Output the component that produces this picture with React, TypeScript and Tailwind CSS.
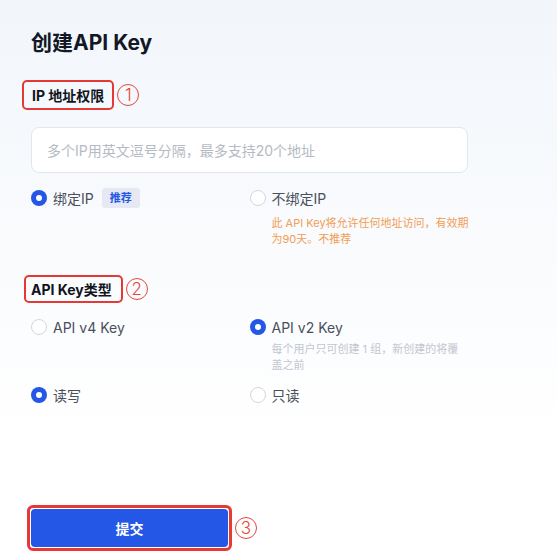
import React from "react";

const Radio: React.FC<{ checked?: boolean }> = ({ checked }) =>
  checked ? (
    <span className="flex h-4 w-4 shrink-0 items-center justify-center rounded-full bg-[#2457e6]">
      <span className="h-[6px] w-[6px] rounded-full bg-white" />
    </span>
  ) : (
    <span className="h-4 w-4 shrink-0 rounded-full border border-[#d3d6de] bg-white" />
  );

const Option: React.FC<{ checked?: boolean; label: string; children?: React.ReactNode }> = ({
  checked,
  label,
  children,
}) => (
  <div className="flex h-5 items-center gap-[6px]">
    <Radio checked={checked} />
    <span className="text-[14px] text-[#4a4f5c]">{label}</span>
    {children}
  </div>
);

// circled step number next to the highlighted blocks
const Marker: React.FC<{ n: string }> = ({ n }) => (
  <span className="ml-[3px] flex h-[22px] w-[22px] items-center justify-center rounded-full border border-[#e8453c] text-[17px] leading-none font-light text-[#e8453c]">
    {n}
  </span>
);

export default function App() {
  return (
    <div className="flex h-[552px] w-full flex-col bg-linear-to-b from-[#f2f6fb] to-white to-[80%] pl-[31px] pt-[29px] pb-[1px] font-['Inter','Noto_Sans_CJK_SC',sans-serif]">
      <div className="w-[437px]">
        <h1 className="text-[21px] leading-[28px] font-bold text-[#121826]">创建API Key</h1>

        {/* IP permission */}
        <div className="mt-[23px] flex items-center">
          <div className="-ml-[9px] flex h-[30px] items-center rounded-[5px] border-2 border-[#e53935] pl-[8px] pr-[8px]">
            <span className="text-[14px] font-bold text-[#10141c]">IP 地址权限</span>
          </div>
          <Marker n="1" />
        </div>

        <input
          className="mt-[17px] h-[46px] w-full rounded-[8px] border border-[#e3e6ee] bg-white px-[15px] text-[14px] outline-none placeholder:text-[#b5bac4]"
          placeholder="多个IP用英文逗号分隔，最多支持20个地址"
        />

        <div className="mt-[15px] grid grid-cols-2">
          <Option checked label="绑定IP">
            <span className="ml-[2px] flex h-5 items-center rounded-[3px] bg-[#e6e9f3] px-[8px] text-[11px] font-bold text-[#2457e6]">
              推荐
            </span>
          </Option>
          <div>
            <Option label="不绑定IP" />
            <p className="-mr-[6px] mt-[7px] pl-[22px] text-[11px] leading-[16px] text-[#f29d55]">
              此 API Key将允许任何地址访问，有效期为90天。不推荐
            </p>
          </div>
        </div>

        {/* API key type */}
        <div className="mt-[28px] flex items-center">
          <div className="-ml-[7px] flex h-[28px] items-center rounded-[5px] border-2 border-[#e53935] pl-[5px] pr-[9px]">
            <span className="text-[14px] font-bold text-[#10141c]">API Key类型</span>
          </div>
          <Marker n="2" />
        </div>

        <div className="mt-[14px] grid grid-cols-2">
          <Option label="API v4 Key" />
          <div>
            <Option checked label="API v2 Key" />
            <p className="mt-[4px] pl-[22px] text-[11px] leading-[16px] text-[#c3c6ce]">
              每个用户只可创建 1 组，新创建的将覆盖之前
            </p>
          </div>
        </div>

        <div className="mt-[12px] grid grid-cols-2">
          <Option checked label="读写" />
          <Option label="只读" />
        </div>
      </div>

      {/* submit */}
      <div className="mt-auto flex items-center">
        <div className="-ml-[4px] rounded-[6px] border-[3px] border-[#e53935] p-[1px]">
          <button className="h-[38px] w-[197px] rounded-[4px] bg-[#2457e6] text-[14px] font-bold text-white">
            提交
          </button>
        </div>
        <Marker n="3" />
      </div>
    </div>
  );
}
